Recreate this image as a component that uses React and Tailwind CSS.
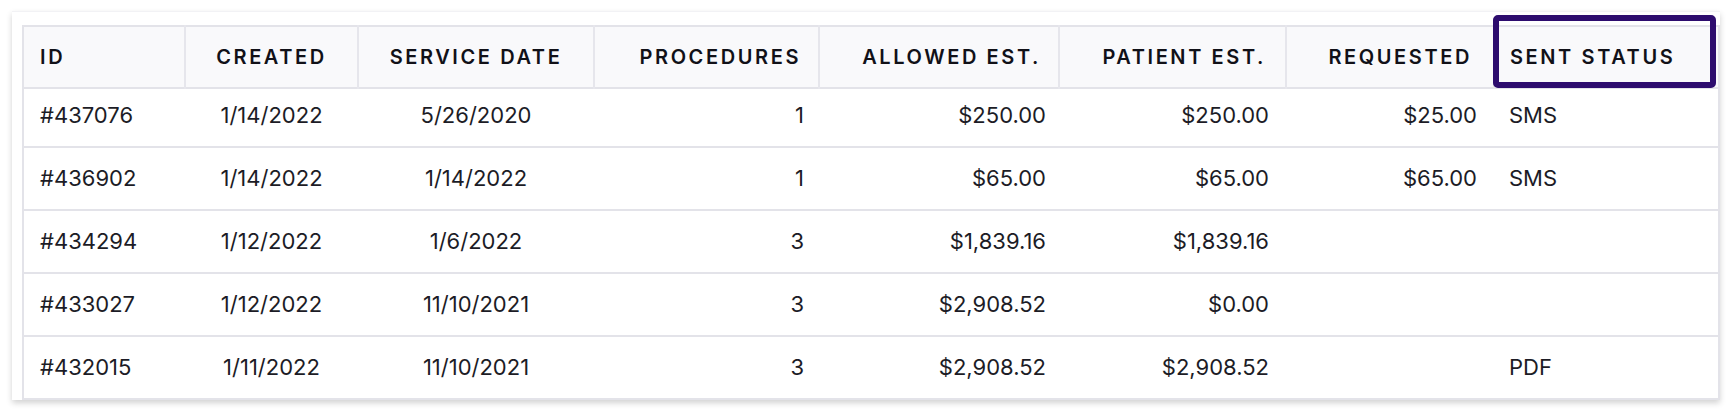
import React from 'react';

const rows = [
  { id: '#437076', created: '1/14/2022', service: '5/26/2020', procedures: 1, allowed: '$250.00', patient: '$250.00', requested: '$25.00', sent: 'SMS' },
  { id: '#436902', created: '1/14/2022', service: '1/14/2022', procedures: 1, allowed: '$65.00', patient: '$65.00', requested: '$65.00', sent: 'SMS' },
  { id: '#434294', created: '1/12/2022', service: '1/6/2022', procedures: 3, allowed: '$1,839.16', patient: '$1,839.16', requested: '', sent: '' },
  { id: '#433027', created: '1/12/2022', service: '11/10/2021', procedures: 3, allowed: '$2,908.52', patient: '$0.00', requested: '', sent: '' },
  { id: '#432015', created: '1/11/2022', service: '11/10/2021', procedures: 3, allowed: '$2,908.52', patient: '$2,908.52', requested: '', sent: 'PDF' },
];

const th = 'h-[62px] text-[20px] font-semibold tracking-[0.13em] text-[#111118] border-r-2 border-[#e6e6ec] bg-[#f9f9fb]';

export default function App() {
  return (
    <div className="min-h-screen bg-white pt-[11px] pl-[12px]" style={{ fontFamily: 'Inter, "Noto Sans", sans-serif' }}>
      <div className="w-[1708px] pl-[10px] pt-[13px] bg-white shadow-[0_3px_6px_rgba(0,0,0,0.18)] border-t border-[#f2f2f5]">
        <table className="w-[1696px] table-fixed border-collapse border-2 border-[#e3e3e9] text-[22px] text-[#1c1c26]">
          <colgroup>
            <col className="w-[162px]" />
            <col className="w-[173px]" />
            <col className="w-[236px]" />
            <col className="w-[225px]" />
            <col className="w-[240px]" />
            <col className="w-[227px]" />
            <col className="w-[208px]" />
            <col className="w-[225px]" />
          </colgroup>
          <thead>
            <tr className="border-b-2 border-[#e3e3e9]">
              <th className={`${th} pl-[16px] text-left`}>ID</th>
              <th className={`${th} px-[4px] text-center`}>CREATED</th>
              <th className={`${th} px-[4px] text-center`}>SERVICE DATE</th>
              <th className={`${th} pr-[17px] text-right`}>PROCEDURES</th>
              <th className={`${th} pr-[17px] text-right`}>ALLOWED EST.</th>
              <th className={`${th} pr-[19px] text-right`}>PATIENT EST.</th>
              <th className={`${th} pr-[21px] text-right`}>REQUESTED</th>
              <th className="relative h-[62px] pl-[15px] text-left text-[20px] font-semibold tracking-[0.13em] text-[#111118] bg-[#f9f9fb] whitespace-nowrap">
                SENT STATUS
                {/* highlight box drawn over the header cell */}
                <div className="absolute -top-[12px] -left-[2px] w-[223px] h-[73px] border-[6px] border-[#2d0c6e] rounded-[5px]" />
              </th>
            </tr>
          </thead>
          <tbody>
            {rows.map((r, i) => (
              <tr key={r.id} className={`${i === 0 ? 'h-[59px] [&>td]:pb-[4px]' : 'h-[63px]'} ${i < rows.length - 1 ? 'border-b-2 border-[#e3e3e9]' : ''}`}>
                <td className="pl-[16px] text-left">{r.id}</td>
                <td className="text-center">{r.created}</td>
                <td className="text-center">{r.service}</td>
                <td className="pr-[15px] text-right">{r.procedures}</td>
                <td className="pr-[13px] text-right">{r.allowed}</td>
                <td className="pr-[17px] text-right">{r.patient}</td>
                <td className="pr-[17px] text-right">{r.requested}</td>
                <td className="pl-[15px] text-left">{r.sent}</td>
              </tr>
            ))}
          </tbody>
        </table>
      </div>
    </div>
  );
}
